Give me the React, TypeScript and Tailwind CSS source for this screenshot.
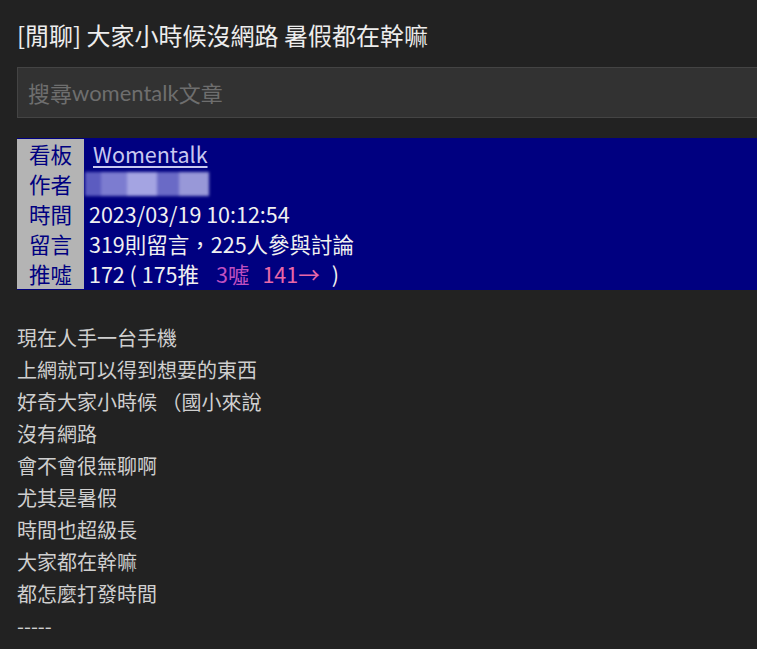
export default function App() {
  const cjk = "font-['Noto_Sans_CJK_TC','Noto_Sans',sans-serif]"
  const rows: { label: string; value: React.ReactNode }[] = [
    {
      label: "看板",
      value: <span className="ml-[4px] text-[#c8c8f0] underline underline-offset-[3px]">Womentalk</span>,
    },
    {
      label: "作者",
      value: (
        <span className="-ml-[4px] flex h-[30px] items-center blur-[1.5px]">
          <span className="h-[24px] w-[16px] bg-[#5c5cc0]" />
          <span className="h-[24px] w-[26px] bg-[#7c7cd0]" />
          <span className="h-[24px] w-[30px] bg-[#a4a4e2]" />
          <span className="h-[24px] w-[22px] bg-[#6a6ac6]" />
          <span className="h-[24px] w-[30px] bg-[#9898d8]" />
        </span>
      ),
    },
    { label: "時間", value: "2023/03/19 10:12:54" },
    { label: "留言", value: "319則留言，225人參與討論" },
    {
      label: "推噓",
      value: (
        <>
          172 ( 175推<span className="ml-[17px] text-[#c050c0]">3噓</span>
          <span className="ml-[13px] text-[#e868a8]">141→</span>
          <span className="ml-[12px]">)</span>
        </>
      ),
    },
  ]
  const body = [
    "現在人手一台手機",
    "上網就可以得到想要的東西",
    "好奇大家小時候 （國小來說",
    "沒有網路",
    "會不會很無聊啊",
    "尤其是暑假",
    "時間也超級長",
    "大家都在幹嘛",
    "都怎麼打發時間",
    "-----",
  ]
  return (
    <div className={`min-h-[649px] w-[757px] overflow-hidden bg-[#222222] pl-[17px] ${cjk}`}>
      <h1 className="pt-[19px] text-[24px] leading-[32px] text-[#ededed]">
        [閒聊] 大家小時候沒網路 暑假都在幹嘛
      </h1>
      <div className="mt-[16px] flex h-[51px] w-[760px] items-center border border-[#444444] bg-[#323232] pl-[10px] text-[22px] text-[#6e6e6e]">
        <span>搜尋</span>
        <span className="font-['Lato',sans-serif]">womentalk</span>
        <span>文章</span>
      </div>
      <div className="mt-[20px] w-[760px] bg-[#000080] py-[1px]">
        {rows.map((r) => (
          <div key={r.label} className="flex h-[30px] text-[21.5px] leading-[30px]">
            <div className="w-[67px] bg-[#b4b4b4] text-center text-[#000080]">{r.label}</div>
            <div className="flex items-center pl-[5px] text-[#f0f0f0]">{r.value}</div>
          </div>
        ))}
      </div>
      <div className="pt-[32px] text-[20px] leading-[32px] text-[#cfcfcf]">
        {body.map((l, i) => (
          <div key={i}>{l}</div>
        ))}
      </div>
    </div>
  )
}
